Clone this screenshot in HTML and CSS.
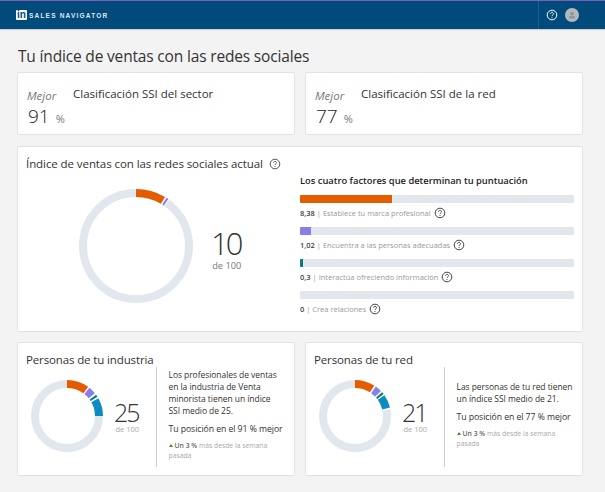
FILE: index.html
```html
<!DOCTYPE html>
<html lang="es">
<head>
<meta charset="utf-8">
<title>Sales Navigator</title>
<link rel="stylesheet" href="styles.css">
</head>
<body>
<header class="topbar">
  <div class="brand"><span class="logo">in</span><span class="brand-name">SALES NAVIGATOR</span></div>
  <div class="top-actions">
    <svg class="help help-light" viewBox="0 0 12 12"><use href="#q"/></svg>
    <span class="avatar"><svg viewBox="0 0 14 14"><circle cx="7" cy="5.6" r="1.9" fill="#8f979e"/><path d="M3.8 10.4c0-1.9 1.2-2.6 3.2-2.6s3.2.7 3.2 2.6z" fill="#8f979e"/></svg></span>
  </div>
</header>
<svg class="defs" width="0" height="0"><defs><symbol id="q" viewBox="0 0 12 12"><circle cx="6" cy="6" r="4.8" fill="none" stroke="currentColor" stroke-width="1"/><path d="M4.5 4.8c0-.9.7-1.4 1.5-1.4s1.5.5 1.5 1.3c0 1.2-1.5 1.2-1.5 2.4" fill="none" stroke="currentColor" stroke-width="1"/><circle cx="6" cy="8.5" r=".6" fill="currentColor"/></symbol></defs></svg>
<main class="page">
  <h1>Tu índice de ventas con las redes sociales</h1>
  <section class="row">
    <div class="card rank">
      <div class="rank-value"><em>Mejor</em><div class="pct"><b>91</b><span>%</span></div></div>
      <div class="rank-label">Clasificación SSI del sector</div>
    </div>
    <div class="card rank">
      <div class="rank-value"><em>Mejor</em><div class="pct"><b>77</b><span>%</span></div></div>
      <div class="rank-label">Clasificación SSI de la red</div>
    </div>
  </section>
  <section class="card current">
    <div class="current-left">
      <h2 class="current-title">Índice de ventas con las redes sociales actual <svg class="help"><use href="#q"/></svg></h2>
      <div class="donut-wrap">
        <svg class="donut-lg" viewBox="0 0 114 114">
          <circle class="track" cx="57" cy="57" r="53" pathLength="100"/>
          <circle class="gap" cx="57" cy="57" r="53" pathLength="100" stroke-dasharray="10 90"/>
          <circle class="orange" cx="57" cy="57" r="53" pathLength="100" stroke-dasharray="8.5 91.5"/>
          <circle class="purple" cx="57" cy="57" r="53" pathLength="100" stroke-dasharray="0 9 .6 90.4"/>
        </svg>
        <div class="score score-lg"><b>10</b><span>de 100</span></div>
      </div>
    </div>
    <div class="factors">
      <h3>Los cuatro factores que determinan tu puntuación</h3>
      <div class="bar"><i class="fill f-orange" style="width:33.6%"></i></div>
      <p class="factor"><b>8,38</b> | Establece tu marca profesional <svg class="help"><use href="#q"/></svg></p>
      <div class="bar"><i class="fill f-purple" style="width:4%"></i></div>
      <p class="factor"><b>1,02</b> | Encuentra a las personas adecuadas <svg class="help"><use href="#q"/></svg></p>
      <div class="bar"><i class="fill f-teal" style="width:1.2%"></i></div>
      <p class="factor"><b>0,3</b> | Interactúa ofreciendo información <svg class="help"><use href="#q"/></svg></p>
      <div class="bar"></div>
      <p class="factor"><b>0</b> | Crea relaciones <svg class="help"><use href="#q"/></svg></p>
    </div>
  </section>
  <section class="row">
    <div class="card people">
      <div class="people-left">
        <h2>Personas de tu industria</h2>
        <div class="donut-wrap-sm">
          <svg class="donut-sm" viewBox="0 0 72 72">
            <circle class="track" cx="36" cy="36" r="32" pathLength="100"/>
            <circle class="gap" cx="36" cy="36" r="32" pathLength="100" stroke-dasharray="25 75"/>
            <circle class="orange" cx="36" cy="36" r="32" pathLength="100" stroke-dasharray="10 90"/>
            <circle class="purple" cx="36" cy="36" r="32" pathLength="100" stroke-dasharray="0 10.7 3.4 85.9"/>
            <circle class="teal" cx="36" cy="36" r="32" pathLength="100" stroke-dasharray="0 15 1 84"/>
            <circle class="blue" cx="36" cy="36" r="32" pathLength="100" stroke-dasharray="0 16.8 8.2 75"/>
          </svg>
          <div class="score score-sm"><b>25</b><span>de 100</span></div>
        </div>
      </div>
      <div class="people-text people-text-top">
        <p>Los profesionales de ventas en la industria de Venta minorista tienen un índice SSI medio de 25.</p>
        <p class="rank-line">Tu posición en el 91 % mejor</p>
        <p class="trend"><span class="arrow"></span><b>Un 3 %</b> más desde la semana pasada</p>
      </div>
    </div>
    <div class="card people">
      <div class="people-left">
        <h2>Personas de tu red</h2>
        <div class="donut-wrap-sm">
          <svg class="donut-sm" viewBox="0 0 72 72">
            <circle class="track" cx="36" cy="36" r="32" pathLength="100"/>
            <circle class="gap" cx="36" cy="36" r="32" pathLength="100" stroke-dasharray="22 78"/>
            <circle class="orange" cx="36" cy="36" r="32" pathLength="100" stroke-dasharray="9 91"/>
            <circle class="purple" cx="36" cy="36" r="32" pathLength="100" stroke-dasharray="0 9.8 3 87.2"/>
            <circle class="teal" cx="36" cy="36" r="32" pathLength="100" stroke-dasharray="0 13.6 1 85.4"/>
            <circle class="blue" cx="36" cy="36" r="32" pathLength="100" stroke-dasharray="0 15.2 6 78.8"/>
          </svg>
          <div class="score score-sm"><b>21</b><span>de 100</span></div>
        </div>
      </div>
      <div class="people-text people-text-mid">
        <p>Las personas de tu red tienen un índice SSI medio de 21.</p>
        <p class="rank-line">Tu posición en el 77 % mejor</p>
        <p class="trend"><span class="arrow"></span><b>Un 3 %</b> más desde la semana pasada</p>
      </div>
    </div>
  </section>
</main>
</body>
</html>
```
FILE: styles.css
```css
* { box-sizing: border-box; }
html, body { margin: 0; height: 100%; }
body { width: 605px; height: 492px; overflow: hidden; background: #f3f3f3; color: #333; font-family: "Open Sans", "Noto Sans", sans-serif; }
.defs { position: absolute; }
.topbar { height: 29px; background: #004b7c; border-top: 1px solid #7f5fb5; display: flex; justify-content: space-between; align-items: stretch; box-shadow: 0 1px 1px rgba(0,0,0,.15); }
.brand { display: flex; align-items: center; padding-left: 16px; gap: 2px; }
.logo { width: 11px; height: 10px; background: #fff; color: #004b7c; border-radius: 1px; font: bold 10px/10px "Liberation Sans", sans-serif; text-align: center; }
.brand-name { color: #dfe6ec; font: bold 6.5px "Liberation Sans", sans-serif; letter-spacing: 1.2px; }
.top-actions { display: flex; align-items: center; gap: 7px; width: 67px; border-left: 1px solid #1d5f8c; padding-left: 7px; }
.help { width: 12px; height: 12px; color: #555; vertical-align: -2px; flex: none; }
.help-light { color: #fff; width: 12px; height: 12px; }
.avatar { width: 14px; height: 14px; border-radius: 50%; background: #b5b8ba; display: flex; }
.avatar svg { width: 14px; height: 14px; }
.page { padding: 18px 22px 0 17px; }
h1 { margin: 0 0 6px 1px; font-size: 15.5px; letter-spacing: -.17px; line-height: 18px; font-weight: 400; color: #333; height: 19px; }
.row { display: flex; gap: 10px; }
.card { background: #fff; border: 1px solid #e3e3e3; border-radius: 2px; flex: 1 1 0; }
.rank { height: 63px; display: flex; padding: 13px 9px 0; }
.rank-value { width: 46px; }
.rank-value em { display: block; font-size: 11.5px; line-height: 16px; color: #777; margin-top: 2px; }
.pct { display: flex; align-items: baseline; gap: 6px; margin-left: 1px; margin-top: 1px; }
.pct b { font-weight: 300; font-size: 19px; line-height: 22px; color: #222; }
.pct span { font-size: 11px; color: #777; }
.rank-label { font-size: 11.5px; line-height: 16px; }
.current { height: 186px; margin: 11px 0 10px; display: flex; }
.current-left { width: 282px; padding: 9px 0 0 8px; }
h2 { margin: 0; font-size: 11.5px; letter-spacing: -.13px; line-height: 16px; font-weight: 400; white-space: nowrap; }
.current-title { letter-spacing: -.08px; }
.current-title .help { margin-left: 3px; }
.donut-wrap { display: flex; align-items: center; margin: 17px 0 0 53px; }
.donut-lg { width: 114px; height: 114px; flex: none; }
.track, .gap, .orange, .purple, .teal, .blue { fill: none; transform: rotate(-90deg); transform-origin: center; }
.donut-lg circle { stroke-width: 8px; }
.donut-sm circle { stroke-width: 8px; }
.track { stroke: #e1e7ed; }
.gap { stroke: #fff; }
.orange { stroke: #e55b00; }
.purple { stroke: #8a7fe8; }
.teal { stroke: #0a7b83; }
.blue { stroke: #0b8dc4; }
.score { display: flex; flex-direction: column; align-items: center; }
.score b { font-weight: 300; }
.score span { color: #777; }
.score-lg { margin: 6px 0 0 18px; }
.score-lg b { font-size: 31px; line-height: 32px; letter-spacing: -3px; margin-right: 2px; }
.score-lg span { font-size: 9.2px; line-height: 10px; margin-top: 2px; }
.factors { flex: 1; padding: 27px 8px 0 0; }
h3 { margin: 0 0 7px; font-size: 9.35px; line-height: 14px; font-weight: 600; color: #222; }
.bar { height: 8px; background: #e1e7ed; border-radius: 1px; overflow: hidden; }
.fill { display: block; height: 100%; }
.f-orange { background: #e55b00; }
.f-purple { background: #8a7fe8; }
.f-teal { background: #0a7b83; }
.factor { margin: 3px 0 6px; height: 15px; font-size: 7.5px; line-height: 15px; color: #999; }
.factor b { color: #444; font-weight: 600; }
.factor .help { width: 12px; height: 12px; margin-left: 1px; color: #444; vertical-align: -3px; }
.people { height: 134px; display: flex; }
.people-left { width: 138px; padding: 9px 0 0 8px; }
.donut-wrap-sm { display: flex; align-items: center; margin: 12px 0 0 5px; }
.donut-sm { width: 72px; height: 72px; flex: none; }
.score-sm { margin: 0 0 0 11px; }
.score-sm b { font-size: 25px; line-height: 26px; letter-spacing: -2px; margin-right: 2px; }
.score-sm span { font-size: 7.5px; line-height: 9px; color: #aaa; }
.people-text { width: 130px; margin-top: 24px; height: 100px; border-left: 1px solid #ccc; padding: 2px 0 0 11.5px; font-size: 8.5px; letter-spacing: -.06px; line-height: 12px; color: #333; }
.people-text-top { padding-right: 3px; }
.people-text-mid { padding-top: 14px; }
.people-text p { margin: 0 0 6px; }
.people-text .rank-line { font-size: 8.7px; white-space: nowrap; }
.people-text .trend { font-size: 6.8px; letter-spacing: 0; line-height: 10px; color: #aaa; }
.trend b { color: #666; font-weight: 600; }
.arrow { display: inline-block; width: 0; height: 0; border: 2.5px solid transparent; border-top: 0; border-bottom: 3px solid #3a8f3a; margin-right: 2px; vertical-align: 1px; }
```
